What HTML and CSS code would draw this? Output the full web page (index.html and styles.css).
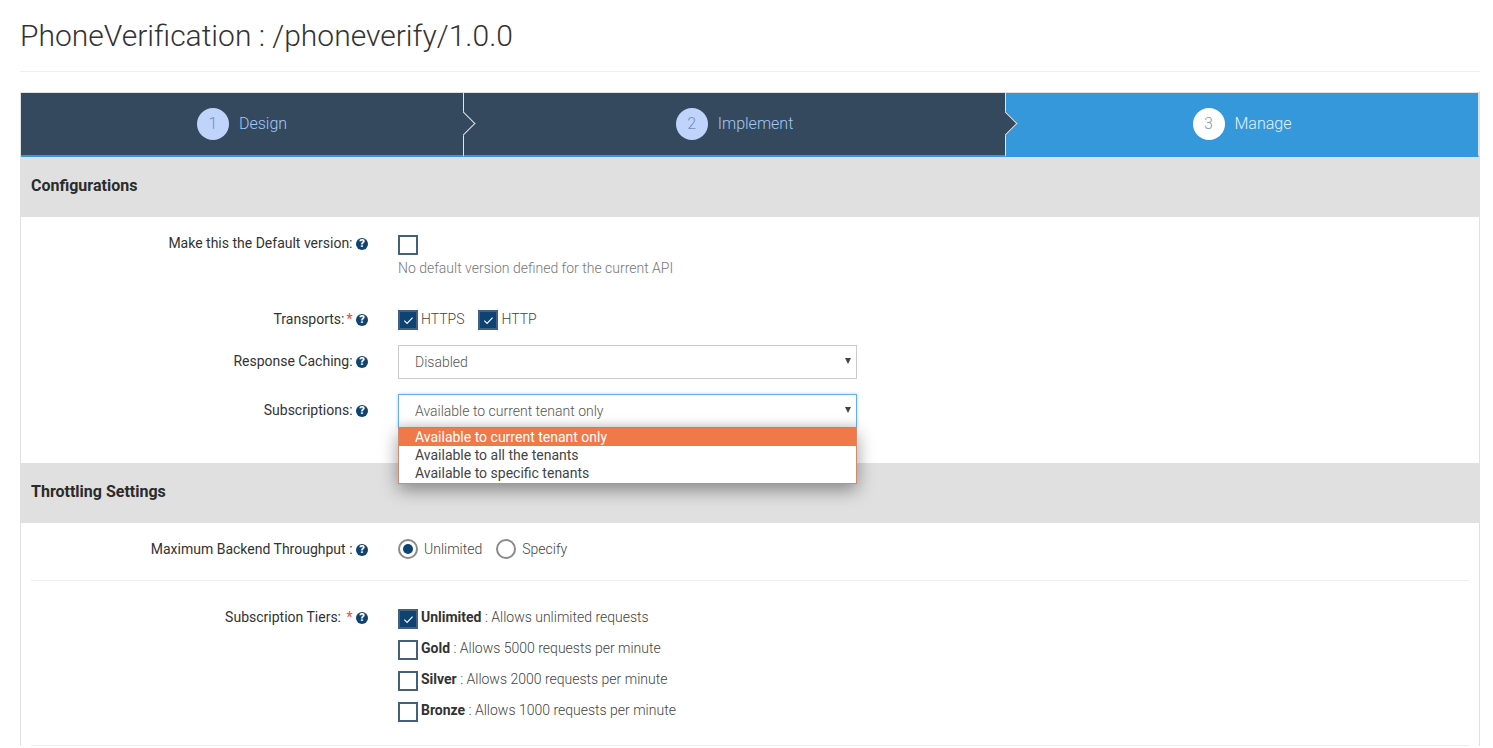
FILE: index.html
```html
<!DOCTYPE html>
<html lang="en">
<head>
    <meta charset="UTF-8">
    <meta name="viewport" content="width=device-width, initial-scale=1.0">
    <title>PhoneVerification</title>
    <link rel="stylesheet" href="styles.css">
</head>
<body>

    <div class="page-title">
        <h1>PhoneVerification : /phoneverify/1.0.0</h1>
    </div>

    <div class="panel">
        <div class="wizard">
            <div class="step step-design"><span class="step-num">1</span><span class="step-name">Design</span></div>
            <div class="step step-implement"><span class="step-num">2</span><span class="step-name">Implement</span></div>
            <div class="step step-manage"><span class="step-num">3</span><span class="step-name">Manage</span></div>
        </div>

        <h2 class="section-title">Configurations</h2>
        <div class="section section-config">
            <div class="row row-default">
                <label class="row-label">Make this the Default version: <span class="help">?</span></label>
                <div class="row-control">
                    <span class="check"></span>
                    <p class="hint">No default version defined for the current API</p>
                </div>
            </div>
            <div class="row row-transports">
                <label class="row-label">Transports:<span class="req">*</span> <span class="help">?</span></label>
                <div class="row-control inline-opts">
                    <span class="opt"><span class="check checked"><svg viewBox="0 0 10 8"><path d="M1.2 4.2l2.5 2.4 5-5.2"/></svg></span>HTTPS</span>
                    <span class="opt"><span class="check checked"><svg viewBox="0 0 10 8"><path d="M1.2 4.2l2.5 2.4 5-5.2"/></svg></span>HTTP</span>
                </div>
            </div>
            <div class="row row-caching">
                <label class="row-label">Response Caching: <span class="help">?</span></label>
                <div class="row-control">
                    <div class="select">Disabled</div>
                </div>
            </div>
            <div class="row row-subs">
                <label class="row-label">Subscriptions: <span class="help">?</span></label>
                <div class="row-control">
                    <div class="select select-open">Available to current tenant only
                        <ul class="dropdown">
                            <li class="active">Available to current tenant only</li>
                            <li>Available to all the tenants</li>
                            <li>Available to specific tenants</li>
                        </ul>
                    </div>
                </div>
            </div>
        </div>

        <h2 class="section-title">Throttling Settings</h2>
        <div class="section">
            <div class="row row-throughput">
                <label class="row-label">Maximum Backend Throughput : <span class="help">?</span></label>
                <div class="row-control inline-opts">
                    <span class="opt"><span class="radio radio-on"></span>Unlimited</span>
                    <span class="opt"><span class="radio"></span>Specify</span>
                </div>
            </div>
            <div class="row row-tiers">
                <label class="row-label">Subscription Tiers: <span class="req">*</span> <span class="help">?</span></label>
                <div class="row-control tier-list">
                    <span class="opt"><span class="check checked"><svg viewBox="0 0 10 8"><path d="M1.2 4.2l2.5 2.4 5-5.2"/></svg></span><b>Unlimited</b>&nbsp;: Allows unlimited requests</span>
                    <span class="opt"><span class="check"></span><b>Gold</b>&nbsp;: Allows 5000 requests per minute</span>
                    <span class="opt"><span class="check"></span><b>Silver</b>&nbsp;: Allows 2000 requests per minute</span>
                    <span class="opt"><span class="check"></span><b>Bronze</b>&nbsp;: Allows 1000 requests per minute</span>
                </div>
            </div>
        </div>
    </div>

</body>
</html>
```

FILE: styles.css
```css
body {
    margin: 0;
    padding: 0 13px 0 20px;
    font-family: Roboto, "Liberation Sans", sans-serif;
    font-size: 14px;
    color: #333;
    background: #fff;
    height: 748px;
    overflow: hidden;
    box-sizing: border-box;
}
.page-title {
    height: 71px;
    border-bottom: 1px solid #eee;
    margin-bottom: 20px;
}
.page-title h1 {
    margin: 0;
    padding-top: 18px;
    font-size: 30px;
    line-height: 36px;
    font-weight: 300;
}
.panel {
    border: 1px solid #e0e0e0;
    border-bottom: none;
}
.wizard {
    display: flex;
    height: 64px;
}
.step {
    position: relative;
    display: flex;
    align-items: center;
    justify-content: center;
    gap: 10px;
    box-sizing: border-box;
    background: #34495e;
    border-bottom: 2px solid #3498db;
    color: #a5c8f5;
    font-size: 16px;
    font-weight: 300;
}
.step-design {
    width: 443px;
    border-right: 1px solid #e4e4e4;
}
.step-implement {
    width: 542px;
    border-right: 1px solid #e4e4e4;
}
.step-manage {
    flex: 1;
    background: #3498db;
    border-right: 1px solid #e0e0e0;
    color: #e3f0fb;
    z-index: 0;
}
/* chevron sticking out of the step divider */
.step-design::after,
.step-implement::after {
    content: "";
    position: absolute;
    right: -9px;
    top: 22px;
    width: 17px;
    height: 17px;
    background: #34495e;
    border-top: 1px solid #e4e4e4;
    border-right: 1px solid #e4e4e4;
    box-sizing: border-box;
    transform: rotate(45deg);
    z-index: 1;
}
.step-num {
    width: 32px;
    height: 32px;
    border-radius: 50%;
    background: #c0d4fb;
    color: #6f8fb8;
    text-align: center;
    line-height: 32px;
}
.step-name {
    padding-bottom: 2px;
}
.step-manage .step-num {
    background: #fff;
    color: #7f9cc4;
}
.section-title {
    margin: 0;
    height: 60px;
    padding-left: 10px;
    background: #e0e0e0;
    font-size: 16px;
    font-weight: 700;
    line-height: 57px;
    color: #2b2b2b;
}
.section {
    padding: 0 10px;
}
.section-config {
    height: 246px;
}
.row {
    display: grid;
    grid-template-columns: 337px 1fr;
    column-gap: 30px;
}
.row-label {
    text-align: right;
    line-height: 20px;
}
.help {
    display: inline-block;
    width: 12px;
    height: 12px;
    border-radius: 50%;
    background: #0d4373;
    color: #fff;
    font-size: 11px;
    font-weight: 900;
    line-height: 12px;
    text-align: center;
    vertical-align: 1px;
}
.req {
    color: #e74c3c;
    margin-left: 2px;
}
.check {
    display: inline-flex;
    align-items: center;
    justify-content: center;
    box-sizing: border-box;
    width: 20px;
    height: 20px;
    border: 2px solid #44607c;
    background: #fff;
    flex: none;
}
.check.checked {
    background: #0d4373;
}
.check svg {
    width: 11px;
    height: 9px;
    fill: none;
    stroke: #fff;
    stroke-width: 1;
}
.radio {
    display: inline-block;
    position: relative;
    box-sizing: border-box;
    width: 20px;
    height: 20px;
    margin-right: 6px;
    border: 2px solid #8a8a8a;
    border-radius: 50%;
    flex: none;
}
.radio-on::after {
    content: "";
    position: absolute;
    left: 3px;
    top: 3px;
    width: 10px;
    height: 10px;
    border-radius: 50%;
    background: #0d4373;
}
.opt {
    display: flex;
    align-items: center;
    color: #444;
    font-weight: 300;
}
.opt .check {
    margin-right: 3px;
}
.opt b {
    color: #333;
    font-weight: 700;
}
.inline-opts {
    display: flex;
    gap: 14px;
}
.hint {
    margin: 3px 0 0;
    color: #777;
    font-weight: 300;
    line-height: 20px;
}
.row-default {
    padding-top: 16px;
}
.row-default .row-control {
    padding-top: 2px;
}
.row-control .check {
    vertical-align: top;
}
.row-transports {
    padding-top: 31px;
}
.row-transports .opt {
    align-items: flex-start;
    line-height: 20px;
}
.row-transports .check {
    margin-top: 1px;
}
.row-caching {
    padding-top: 15px;
}
.row-caching .row-label {
    padding-top: 6px;
}
.row-subs {
    padding-top: 15px;
}
.row-subs .row-label {
    padding-top: 6px;
}
.select {
    position: relative;
    box-sizing: border-box;
    width: 459px;
    height: 34px;
    padding-left: 16px;
    border: 1px solid #ccc;
    color: #555;
    font-weight: 300;
    line-height: 32px;
}
.select::after {
    content: "";
    position: absolute;
    right: 5px;
    top: 12px;
    border-left: 3.5px solid transparent;
    border-right: 3.5px solid transparent;
    border-top: 6px solid #444;
}
.select-open {
    border-color: #66afe9;
    box-shadow: inset 0 -8px 10px -6px rgba(0, 0, 0, 0.12), 0 0 3px rgba(102, 175, 233, 0.6);
}
.dropdown {
    position: absolute;
    left: -1px;
    top: 33px;
    z-index: 5;
    width: 459px;
    box-sizing: border-box;
    margin: 0;
    padding: 0 0 1px;
    list-style: none;
    background: #fff;
    border: 1px solid #d08a70;
    border-top: none;
    color: #444;
    font-weight: 400;
    box-shadow: 0 6px 18px rgba(0, 0, 0, 0.4);
}
.dropdown li {
    height: 18px;
    padding-left: 16px;
    line-height: 18px;
}
.dropdown li.active {
    background: #f0794a;
    color: #fff;
}
.row-throughput {
    padding: 16px 0 21px;
    border-bottom: 1px solid #eee;
}
.row-tiers {
    padding: 26px 0 23px;
    border-bottom: 1px solid #eee;
}
.tier-list {
    display: flex;
    flex-direction: column;
    gap: 9px;
}
.tier-list .opt {
    align-items: flex-start;
    line-height: 20px;
    height: 22px;
}
.tier-list .check {
    margin-top: 2px;
}
```
